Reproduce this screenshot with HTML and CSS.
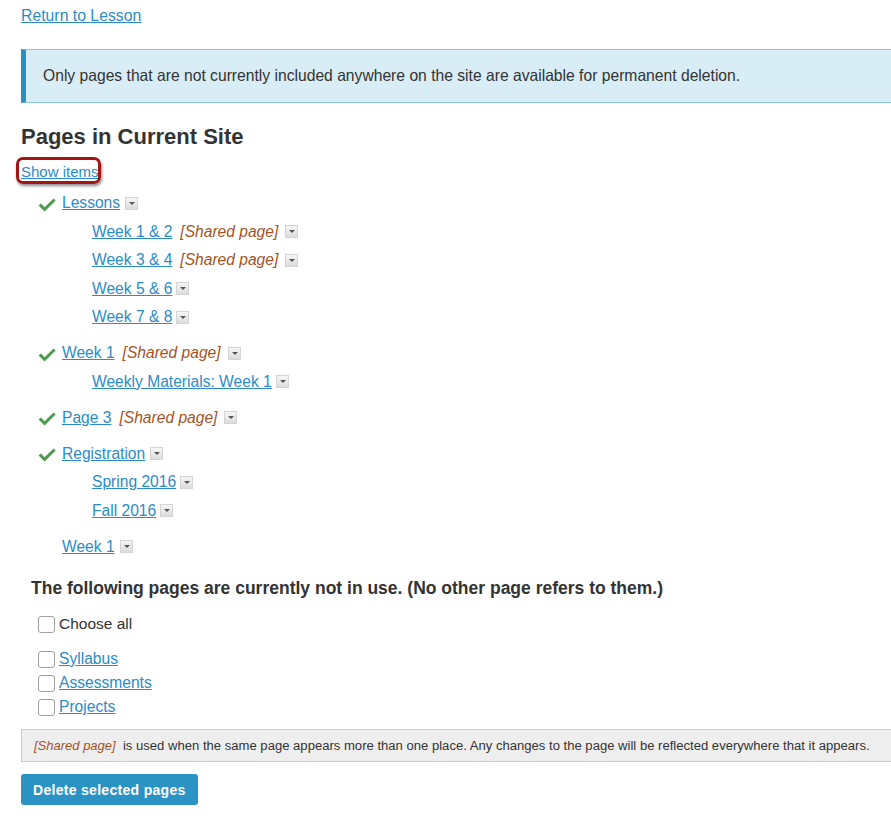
FILE: index.html
```html
<!DOCTYPE html>
<html>
<head>
<meta charset="utf-8">
<link rel="stylesheet" href="styles.css">
</head>
<body>
<main class="page">
  <a class="back" href="#">Return to Lesson</a>
  <div class="alert">Only pages that are not currently included anywhere on the site are available for permanent deletion.</div>
  <h2 class="title">Pages in Current Site</h2>
  <div class="show"><a href="#">Show items</a><span class="callout"></span></div>

  <div class="tree">
    <div class="group">
      <div class="row lvl1"><svg class="check" viewBox="0 0 18 14"><path d="M0.5 7.6 L3 5.6 L6.6 9.2 L15.6 0.6 L17.6 2.6 L6.6 13.6 Z"/></svg><a href="#">Lessons</a><span class="dd"></span></div>
      <div class="row lvl2"><a href="#">Week 1 &amp; 2</a><em class="shared">[Shared page]</em><span class="dd wide"></span></div>
      <div class="row lvl2"><a href="#">Week 3 &amp; 4</a><em class="shared">[Shared page]</em><span class="dd wide"></span></div>
      <div class="row lvl2"><a href="#">Week 5 &amp; 6</a><span class="dd tight"></span></div>
      <div class="row lvl2"><a href="#">Week 7 &amp; 8</a><span class="dd tight"></span></div>
    </div>
    <div class="group">
      <div class="row lvl1"><svg class="check" viewBox="0 0 18 14"><path d="M0.5 7.6 L3 5.6 L6.6 9.2 L15.6 0.6 L17.6 2.6 L6.6 13.6 Z"/></svg><a href="#">Week 1</a><em class="shared">[Shared page]</em><span class="dd wide"></span></div>
      <div class="row lvl2"><a href="#">Weekly Materials: Week 1</a><span class="dd tight"></span></div>
    </div>
    <div class="group">
      <div class="row lvl1"><svg class="check" viewBox="0 0 18 14"><path d="M0.5 7.6 L3 5.6 L6.6 9.2 L15.6 0.6 L17.6 2.6 L6.6 13.6 Z"/></svg><a href="#">Page 3</a><em class="shared">[Shared page]</em><span class="dd wide"></span></div>
    </div>
    <div class="group">
      <div class="row lvl1"><svg class="check" viewBox="0 0 18 14"><path d="M0.5 7.6 L3 5.6 L6.6 9.2 L15.6 0.6 L17.6 2.6 L6.6 13.6 Z"/></svg><a href="#">Registration</a><span class="dd"></span></div>
      <div class="row lvl2"><a href="#">Spring 2016</a><span class="dd tight"></span></div>
      <div class="row lvl2"><a href="#">Fall 2016</a><span class="dd tight"></span></div>
    </div>
    <div class="group">
      <div class="row lvl1 nocheck"><a href="#">Week 1</a><span class="dd"></span></div>
    </div>
  </div>

  <h3 class="unused">The following pages are currently not in use. (No other page refers to them.)</h3>
  <label class="choose"><input type="checkbox" class="cb">Choose all</label>
  <ul class="pages">
    <li><input type="checkbox" class="cb"><a href="#">Syllabus</a></li>
    <li><input type="checkbox" class="cb"><a href="#">Assessments</a></li>
    <li><input type="checkbox" class="cb"><a href="#">Projects</a></li>
  </ul>
  <div class="note"><em class="shared">[Shared page]</em>&nbsp; is used when the same page appears more than one place. Any changes to the page will be reflected everywhere that it appears.</div>
  <button class="delete" type="button">Delete selected pages</button>
</main>
</body>
</html>
```
FILE: styles.css
```css
html, body {
  margin: 0;
  padding: 0;
  overflow: hidden;
  background: #fff;
}
body {
  font-family: "Liberation Sans", Arial, sans-serif;
  color: #333;
}
a {
  color: #2b8cc8;
  text-decoration: underline;
}
.page {
  padding: 6px 0 0 21px;
}
.back {
  display: inline-block;
  font-size: 15.8px;
  line-height: 20px;
}
.alert {
  margin: 23px -40px 0 0;
  background: #d9edf7;
  border-top: 1px solid #8cc6e3;
  border-bottom: 1px solid #8cc6e3;
  border-left: 5px solid #2b8fc3;
  padding: 16px 0 16px 17px;
  font-size: 15.67px;
  line-height: 20px;
  color: #333;
}
.title {
  margin: 21px 0 0;
  font-size: 22px;
  line-height: 26px;
  font-weight: bold;
  color: #333;
}
.show {
  position: relative;
  display: inline-block;
  margin-top: 12px;
  font-size: 15px;
  line-height: 20px;
}
.callout {
  position: absolute;
  left: -5px;
  top: -5px;
  width: 79px;
  height: 21px;
  border: 3px solid #a31515;
  border-radius: 7px;
  box-shadow: 1px 2px 3px rgba(0,0,0,0.45);
  pointer-events: none;
}
.tree {
  margin-top: 7px;
}
.group + .group {
  margin-top: 7.5px;
}
.row {
  display: flex;
  align-items: center;
  height: 28.5px;
  font-size: 15.6px;
}
.lvl1 {
  padding-left: 17px;
}
.lvl1.nocheck {
  padding-left: 41px;
}
.lvl2 {
  padding-left: 71px;
}
.check {
  width: 18px;
  height: 14px;
  margin-right: 6px;
  margin-top: 3px;
  fill: #4c9b4c;
}
.shared {
  color: #a5531f;
  font-style: italic;
  font-size: 15.6px;
  margin-left: 8px;
}
.dd {
  position: relative;
  width: 13px;
  height: 13px;
  margin-left: 5px;
  box-sizing: border-box;
  border: 1px solid #d4d4d4;
  background: linear-gradient(#f6f6f6, #dcdcdc);
}
.dd.wide {
  margin-left: 7px;
}
.dd.tight {
  margin-left: 4px;
}
.dd::after {
  content: "";
  position: absolute;
  left: 3px;
  top: 4px;
  border-left: 3px solid transparent;
  border-right: 3px solid transparent;
  border-top: 3px solid #555;
}
.unused {
  margin: 15px 0 0 10px;
  font-size: 17.5px;
  line-height: 24px;
  font-weight: bold;
  color: #333;
}
.cb {
  appearance: none;
  -webkit-appearance: none;
  width: 17px;
  height: 17px;
  margin: 0 4px 0 0;
  border: 1px solid #a0a0a0;
  border-radius: 3px;
  background: #fff;
  box-sizing: border-box;
  flex: none;
}
.choose {
  display: flex;
  align-items: center;
  margin: 12px 0 0 17px;
  height: 24px;
  font-size: 15.5px;
  color: #333;
}
.pages {
  list-style: none;
  margin: 11px 0 0 17px;
  padding: 0;
}
.pages li {
  display: flex;
  align-items: center;
  height: 24px;
  font-size: 15.6px;
}
.note {
  margin: 10px -40px 0 0;
  background: #eeeeee;
  border: 1px solid #cccccc;
  padding: 0 0 0 12px;
  height: 31px;
  line-height: 31px;
  font-size: 13.08px;
  color: #333;
}
.note .shared {
  margin-left: 0;
  font-size: 13px;
}
.delete {
  display: block;
  margin-top: 12px;
  height: 31px;
  padding: 0 12px;
  background: #2a93c3;
  border: none;
  border-radius: 3px;
  color: #fff;
  font-family: "Liberation Sans", Arial, sans-serif;
  font-weight: bold;
  font-size: 14px;
  letter-spacing: 0.3px;
}
```
